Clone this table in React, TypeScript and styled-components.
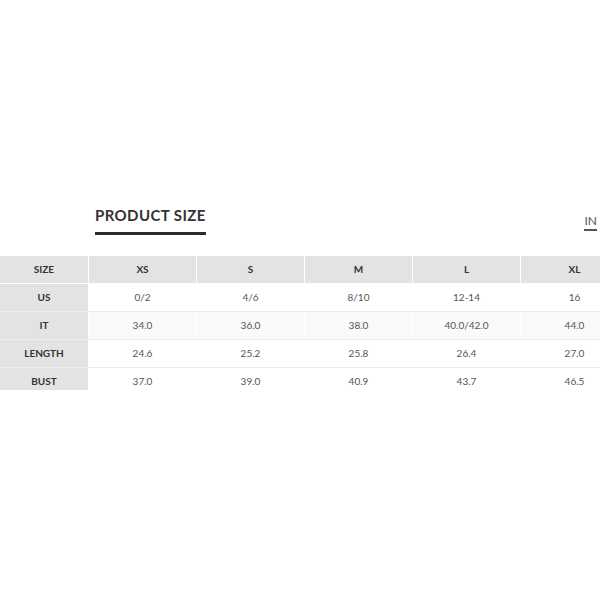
import React from "react";
import styled, { createGlobalStyle } from "styled-components";

const Global = createGlobalStyle`
  html, body { margin: 0; padding: 0; background: #ffffff; }
  body { font-family: Lato, "Open Sans", sans-serif; overflow: hidden; }
`;

const Page = styled.div`
  width: 600px;
  height: 600px;
  padding-top: 206px;
  box-sizing: border-box;
  overflow: hidden;
`;

const HeaderBar = styled.div`
  display: flex;
  justify-content: space-between;
  align-items: flex-start;
  padding-left: 95px;
  height: 50px;
`;

const Title = styled.h2`
  margin: 0;
  font-size: 15px;
  line-height: 18px;
  font-weight: 700;
  color: #333333;
  letter-spacing: 0.4px;
  padding-bottom: 8px;
  border-bottom: 3px solid #2b2b2b;
`;

const UnitToggle = styled.span`
  margin-top: 8px;
  margin-right: 3px;
  font-size: 12px;
  line-height: 14px;
  color: #555555;
  padding-bottom: 1px;
  border-bottom: 2px solid #555555;
  white-space: nowrap;
`;

const TableWrap = styled.div`
  width: 600px;
  height: 134px;
  overflow: hidden;
`;

const Row = styled.div<{ $head?: boolean; $shade?: boolean }>`
  display: grid;
  grid-template-columns: 88px repeat(5, 107px);
  column-gap: 1px;
  width: 631px;
  height: 27px;
  background: ${(p) => (p.$head ? "#e3e3e3" : p.$shade ? "#fafafa" : "#ffffff")};
  border-bottom: 1px solid ${(p) => (p.$head ? "#ffffff" : "#ececec")};
  background-clip: padding-box;
`;

const Cell = styled.div<{ $label?: boolean; $head?: boolean; $shade?: boolean }>`
  display: flex;
  align-items: center;
  justify-content: center;
  font-size: 10px;
  padding-bottom: 2px;
  font-weight: ${(p) => (p.$label || p.$head ? 700 : 400)};
  color: ${(p) => (p.$label || p.$head ? "#333333" : "#555555")};
  background: ${(p) =>
    p.$label || p.$head ? "#e3e3e3" : p.$shade ? "#fafafa" : "#ffffff"};
  box-shadow: 1px 0 0 #ffffff;
`;

const sizes = ["XS", "S", "M", "L", "XL"];
const rows: { label: string; values: string[] }[] = [
  { label: "US", values: ["0/2", "4/6", "8/10", "12-14", "16"] },
  { label: "IT", values: ["34.0", "36.0", "38.0", "40.0/42.0", "44.0"] },
  { label: "LENGTH", values: ["24.6", "25.2", "25.8", "26.4", "27.0"] },
  { label: "BUST", values: ["37.0", "39.0", "40.9", "43.7", "46.5"] },
];

export default function App() {
  return (
    <Page>
      <Global />
      <HeaderBar>
        <Title>PRODUCT SIZE</Title>
        <UnitToggle>IN</UnitToggle>
      </HeaderBar>
      <TableWrap>
        <Row $head>
          <Cell $head>SIZE</Cell>
          {sizes.map((s) => (
            <Cell key={s} $head>
              {s}
            </Cell>
          ))}
        </Row>
        {rows.map((r, i) => (
          <Row key={r.label} $shade={i === 1}>
            <Cell $label>{r.label}</Cell>
            {r.values.map((v, j) => (
              <Cell key={j} $shade={i === 1}>
                {v}
              </Cell>
            ))}
          </Row>
        ))}
      </TableWrap>
    </Page>
  );
}
